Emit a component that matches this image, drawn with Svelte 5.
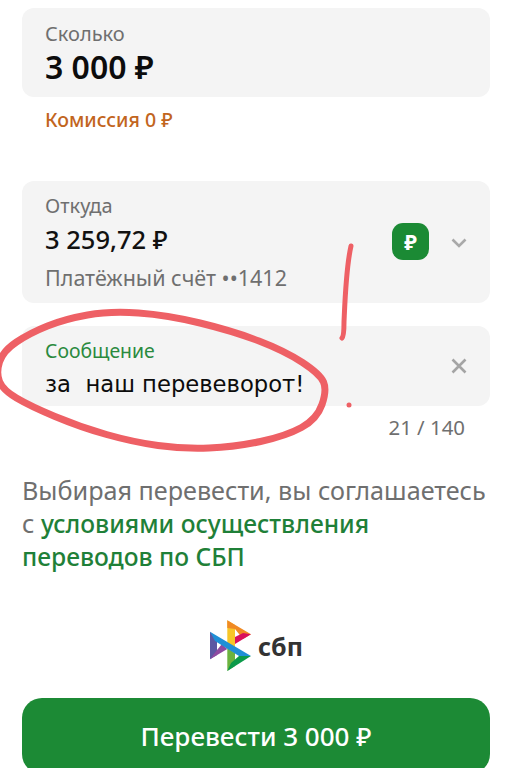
<script lang="ts">
  const amount = '3 000 ₽';
  const count = '21 / 140';

  // hand-drawn ring around the message, traced from the screenshot
  const ring = [
    [30, 333], [65, 319], [110, 311], [167, 315], [233, 331], [285, 351], [320, 374], [327, 390], [317, 419],
    [286, 436], [235, 447], [183, 449], [133, 442], [80, 427], [30, 406], [3, 390], [-4, 373], [3, 351],
  ];

  function smoothLoop(pts: number[][]): string {
    const mid = (a: number[], b: number[]) => `${(a[0] + b[0]) / 2} ${(a[1] + b[1]) / 2}`;
    let d = `M${mid(pts[pts.length - 1], pts[0])}`;
    pts.forEach((p, i) => {
      d += `Q${p[0]} ${p[1]} ${mid(p, pts[(i + 1) % pts.length])}`;
    });
    return d + 'Z';
  }
</script>

<div class="screen">
  <div class="card amount">
    <span class="label">Сколько</span>
    <span class="value-big">{amount}</span>
  </div>
  <p class="fee">Комиссия 0 ₽</p>

  <div class="card source">
    <div class="source-info">
      <span class="label">Откуда</span>
      <span class="value">3 259,72 ₽</span>
      <span class="account">Платёжный счёт ••1412</span>
    </div>
    <div class="currency">₽</div>
    <svg class="chevron" width="16" height="10" viewBox="0 0 16 10">
      <path d="M1.5 1.5 8 8l6.5-6.5" fill="none" stroke="#a9a9a9" stroke-width="2.6" />
    </svg>
  </div>

  <div class="card message">
    <div class="message-info">
      <span class="message-label">Сообщение</span>
      <span class="message-text">за&nbsp; наш перевеворот!</span>
    </div>
    <svg class="clear" width="16" height="16" viewBox="0 0 16 16">
      <path d="M1.5 1.5l13 13M14.5 1.5l-13 13" fill="none" stroke="#a4a4a4" stroke-width="2.6" />
    </svg>
  </div>
  <div class="counter">{count}</div>

  <p class="terms">
    Выбирая перевести, вы соглашаетесь<br />с <span class="link">условиями осуществления<br />переводов по СБП</span>
  </p>

  <div class="logo">
    <svg width="43" height="52" viewBox="0 0 43 52">
      <polygon points="18.3,0.3 18.3,26 26,30 26,5" fill="#f7c628" />
      <polygon points="18.3,0.3 42,14.3 34,19 26,9 18.3,8" fill="#f08a24" />
      <polygon points="42,14.3 26,24 26,17 34,13" fill="#d9115c" />
      <polygon points="1,11.7 1,39.3 8,35 8,18" fill="#5b57a2" />
      <polygon points="1,39.3 18.3,29 13,24 8,30" fill="#8e4aa0" />
      <polygon points="18.3,51 18.3,28 26,33 26,46" fill="#6cb33f" />
      <polygon points="18.3,51 42,36 30,36 22,43" fill="#0b9a4a" />
      <polygon points="1,11.7 42,36 30,36 6,21" fill="#1f8fd6" />
    </svg>
    <span class="logo-text">сбп</span>
  </div>

  <button class="submit">Перевести {amount}</button>

  <svg class="marks" width="513" height="768" viewBox="0 0 513 768">
    <path d={smoothLoop(ring)} fill="none" stroke="#ee6065" stroke-width="7" />
    <path d="M351 246C346 268 345 300 344 322C344 333 343 337 342 338" fill="none" stroke="#ee6065" stroke-width="5" stroke-linecap="round" />
    <circle cx="349" cy="405" r="2.5" fill="#ee6065" />
  </svg>
</div>

<style>
  :global(body) {
    margin: 0;
    background: #fff;
  }

  .screen {
    position: relative;
    width: 513px;
    height: 768px;
    padding: 8px 23px 0 22px;
    box-sizing: border-box;
    overflow: hidden;
    font-family: "Noto Sans", "Open Sans", sans-serif;
  }

  .card {
    background: #f4f4f4;
    border-radius: 12px;
    box-sizing: border-box;
    padding: 0 23px;
  }

  .amount {
    height: 89px;
    display: flex;
    flex-direction: column;
    padding-top: 13px;
  }

  .label {
    font-size: 20px;
    line-height: 26px;
    color: #6f6f6f;
  }

  .value-big {
    margin-top: -1px;
    font-size: 32px;
    line-height: 42px;
    font-weight: 600;
    color: #0c0c0c;
  }

  .fee {
    margin: 10px 0 0 23px;
    font-size: 19.5px;
    line-height: 26px;
    font-weight: 500;
    color: #c2651e;
  }

  .source {
    margin-top: 48px;
    height: 122px;
    display: flex;
    align-items: flex-start;
  }

  .source-info {
    flex: 1;
    display: flex;
    flex-direction: column;
    padding-top: 12px;
  }

  .value {
    margin-top: 4px;
    font-size: 25.5px;
    line-height: 32px;
    font-weight: 500;
    color: #111;
  }

  .account {
    margin-top: 9px;
    font-size: 21.5px;
    line-height: 28px;
    color: #6f6f6f;
  }

  .currency {
    width: 37px;
    height: 37px;
    margin-top: 42px;
    border-radius: 11px;
    background: #1b8a34;
    color: #fff;
    font-size: 21px;
    font-weight: 700;
    display: flex;
    align-items: center;
    justify-content: center;
  }

  .chevron {
    margin: 57px 0 0 22px;
  }

  .message {
    margin-top: 23px;
    height: 80px;
    display: flex;
    align-items: center;
  }

  .message-info {
    flex: 1;
    display: flex;
    flex-direction: column;
    padding-top: 5px;
  }

  .message-label {
    font-size: 19.4px;
    line-height: 26px;
    color: #2a8a3e;
  }

  .message-text {
    margin-top: 5px;
    font-family: "DejaVu Sans", sans-serif;
    font-size: 22.7px;
    line-height: 30px;
    color: #0c0c0c;
  }

  .counter {
    margin: 9px 25px 0 0;
    text-align: right;
    font-size: 20.4px;
    line-height: 24px;
    color: #6f6f6f;
  }

  .terms {
    margin: 35px 0 0;
    font-size: 25.2px;
    line-height: 33px;
    white-space: nowrap;
    color: #6f6f6f;
  }

  .link {
    font-size: 24.6px;
    color: #1f8038;
    font-weight: 500;
  }

  .logo {
    margin-top: 47px;
    display: flex;
    align-items: center;
    justify-content: center;
    gap: 6px;
  }

  .logo-text {
    font-size: 25px;
    font-weight: 700;
    color: #333;
  }

  .submit {
    display: block;
    width: 100%;
    height: 76px;
    margin-top: 26px;
    border: 0;
    border-radius: 20px;
    background: #1c8a35;
    color: #fff;
    font-family: inherit;
    font-size: 26px;
    font-weight: 500;
  }

  .marks {
    position: absolute;
    inset: 0;
    pointer-events: none;
  }
</style>
